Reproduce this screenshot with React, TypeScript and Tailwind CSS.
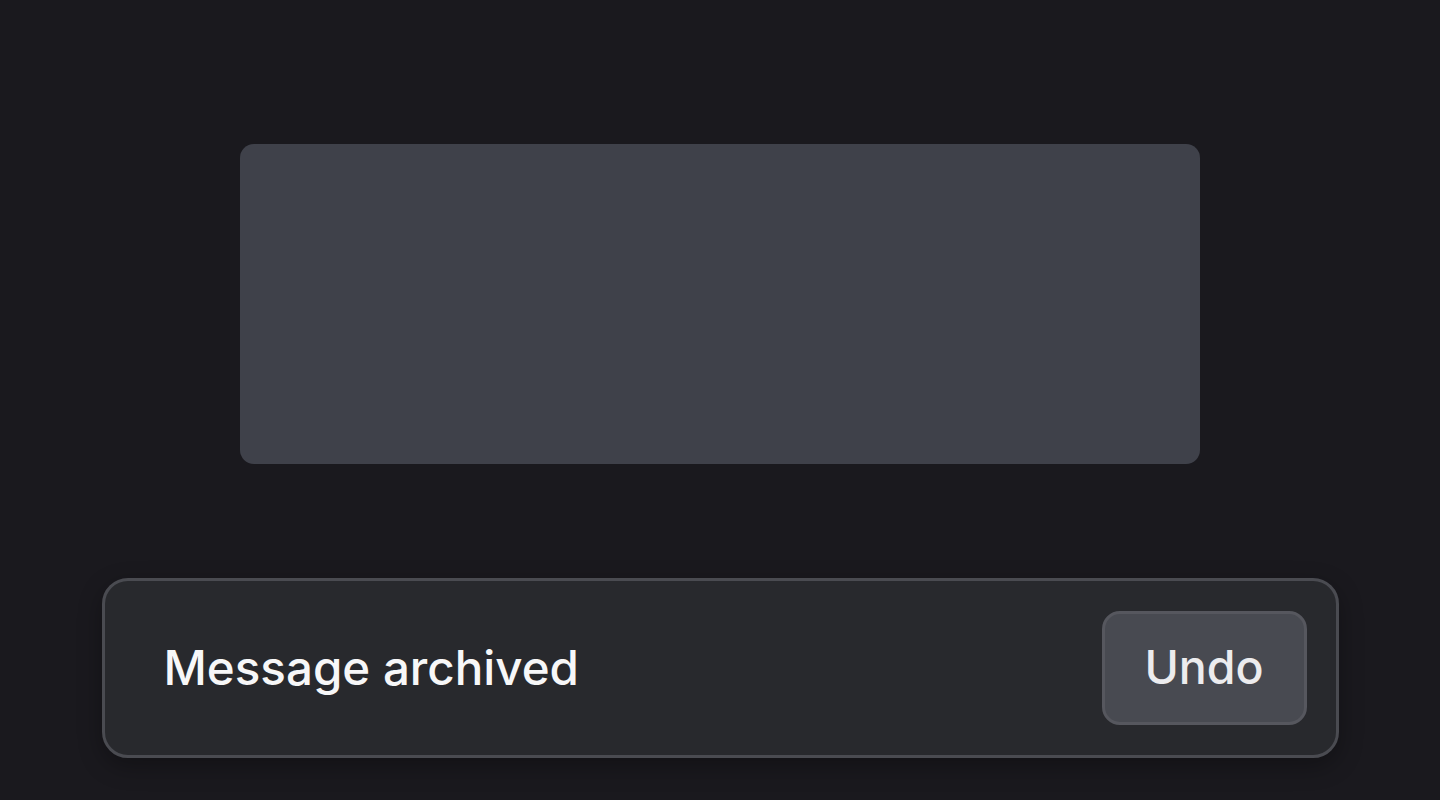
import React from "react";

export default function App() {
  return (
    <div
      className="w-[1440px] h-[800px] bg-[#1a191e] flex flex-col items-center overflow-hidden"
      style={{ fontFamily: "Inter, 'Noto Sans', sans-serif" }}
    >
      <div className="mt-[144px] w-[960px] h-[320px] rounded-[14px] bg-[#3f414a]" />
      <div className="mt-[114px] w-[1237px] h-[180px] rounded-[26px] border-[3px] border-[#4a4b51] bg-[#28292d] flex items-center justify-between pl-[59px] pr-[29px] shadow-[0_8px_24px_rgba(0,0,0,0.3)]">
        <span className="text-[47.5px] font-medium text-[#f7f7f8]">
          Message archived
        </span>
        <button className="w-[205px] h-[114px] rounded-[18px] border-[3px] border-[#56575e] bg-[#484a51] text-[46.5px] font-medium text-[#ececee]">
          Undo
        </button>
      </div>
    </div>
  );
}
